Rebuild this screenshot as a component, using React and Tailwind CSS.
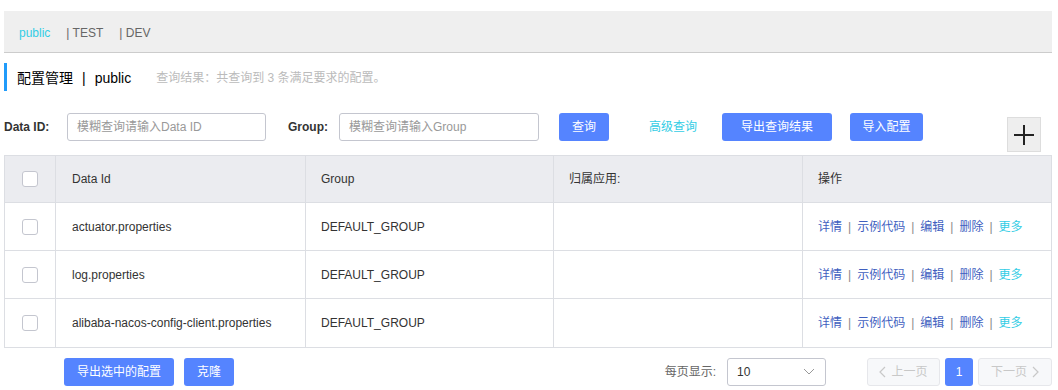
import React from 'react';

const rows = [
  { id: 'actuator.properties', group: 'DEFAULT_GROUP' },
  { id: 'log.properties', group: 'DEFAULT_GROUP' },
  { id: 'alibaba-nacos-config-client.properties', group: 'DEFAULT_GROUP' },
];

const font = { fontFamily: '"Liberation Sans", "Noto Sans CJK SC", sans-serif' };

const Checkbox = () => (
  <span className="block w-[16px] h-[16px] rounded-[3px] border border-[#c4c6cf] bg-white" />
);

const Actions = () => (
  <div className="flex items-center text-[12px] text-[#3f5fbf]">
    <span>详情</span>
    <span className="mx-[6px] text-[#888]">|</span>
    <span>示例代码</span>
    <span className="mx-[6px] text-[#888]">|</span>
    <span>编辑</span>
    <span className="mx-[6px] text-[#888]">|</span>
    <span>删除</span>
    <span className="mx-[6px] text-[#888]">|</span>
    <span className="text-[#33cde5]">更多</span>
  </div>
);

export default function App() {
  return (
    <div className="w-[1058px] h-[390px] bg-white overflow-hidden pl-[4px] text-[#333]" style={font}>
      {/* namespace tabs */}
      <div className="mt-[11px] w-[1048px] h-[42px] bg-[#efefef] border-b border-[#cccccc] flex items-center pt-[3px] pl-[15px] text-[12px]">
        <span className="text-[#33cde5]">public</span>
        <span className="ml-[16px] text-[#666]">| TEST</span>
        <span className="ml-[16px] text-[#666]">| DEV</span>
      </div>

      {/* title */}
      <div className="mt-[10px] h-[28px] border-l-[3px] border-[#209bfa] pl-[10px] pt-[2px] flex items-center">
        <span className="text-[14px] text-[#000]">配置管理</span>
        <span className="text-[14px] text-[#000] mx-[9px]">|</span>
        <span className="text-[14px] text-[#000]">public</span>
        <span className="ml-[25px] text-[12px] text-[#bbbbbb]">查询结果：共查询到 3 条满足要求的配置。</span>
      </div>

      {/* search row */}
      <div className="mt-[22px] w-[1048px] flex items-start">
        <div className="h-[28px] flex items-center text-[12px] font-bold text-[#333] w-[63px]">Data ID:</div>
        <div className="w-[199px] h-[28px] border border-[#c4c6cf] rounded-[3px] flex items-center px-[9px] text-[12px] text-[#999]">
          模糊查询请输入Data ID
        </div>
        <div className="h-[28px] ml-[22px] w-[51px] flex items-center text-[12px] font-bold text-[#333]">Group:</div>
        <div className="w-[200px] h-[28px] border border-[#c4c6cf] rounded-[3px] flex items-center px-[9px] text-[12px] text-[#999]">
          模糊查询请输入Group
        </div>
        <div className="ml-[20px] w-[50px] h-[28px] rounded-[3px] bg-[#5584ff] text-white text-[12px] flex items-center justify-center">查询</div>
        <div className="ml-[40px] h-[28px] flex items-center text-[12px] text-[#33cde5]">高级查询</div>
        <div className="ml-[25px] w-[110px] h-[28px] rounded-[3px] bg-[#5584ff] text-white text-[12px] flex items-center justify-center">导出查询结果</div>
        <div className="ml-[18px] w-[73px] h-[28px] rounded-[3px] bg-[#5584ff] text-white text-[12px] flex items-center justify-center">导入配置</div>
        <div className="ml-auto mr-[11px] mt-[4px] w-[34px] h-[35px] bg-[#eeeeee] border border-[#dddddd] flex items-center justify-center">
          <svg width="22" height="22" viewBox="0 0 22 22">
            <path d="M11 1v20M1 11h20" stroke="#222" strokeWidth="2" />
          </svg>
        </div>
      </div>

      {/* table */}
      <div className="mt-[3px] w-[1048px] border border-[#dcdee3] text-[12px] text-[#333]">
        <div className="flex h-[47px] bg-[#ebecf0] border-b border-[#dcdee3]">
          <div className="w-[51px] flex items-center justify-center border-r border-[#dcdee3]"><Checkbox /></div>
          <div className="w-[250px] flex items-center pl-[16px] border-r border-[#dcdee3]">Data Id</div>
          <div className="w-[248px] flex items-center pl-[15px] border-r border-[#dcdee3]">Group</div>
          <div className="w-[249px] flex items-center pl-[15px] border-r border-[#dcdee3]">归属应用:</div>
          <div className="flex-1 flex items-center pl-[15px]">操作</div>
        </div>
        {rows.map((r, i) => (
          <div key={r.id} className={`flex h-[48px] ${i < rows.length - 1 ? 'border-b border-[#dcdee3]' : ''}`}>
            <div className="w-[51px] flex items-center justify-center border-r border-[#dcdee3]"><Checkbox /></div>
            <div className="w-[250px] flex items-center pl-[16px] border-r border-[#dcdee3]">{r.id}</div>
            <div className="w-[248px] flex items-center pl-[15px] border-r border-[#dcdee3]">{r.group}</div>
            <div className="w-[249px] border-r border-[#dcdee3]" />
            <div className="flex-1 flex items-center pl-[15px]"><Actions /></div>
          </div>
        ))}
      </div>

      {/* footer */}
      <div className="mt-[10px] w-[1048px] flex items-center h-[28px]">
        <div className="ml-[60px] w-[110px] h-[28px] rounded-[3px] bg-[#5584ff] text-white text-[12px] flex items-center justify-center">导出选中的配置</div>
        <div className="ml-[10px] w-[50px] h-[28px] rounded-[3px] bg-[#5584ff] text-white text-[12px] flex items-center justify-center">克隆</div>
        <div className="ml-auto text-[12px] text-[#666]">每页显示:</div>
        <div className="ml-[11px] w-[99px] h-[28px] border border-[#c4c6cf] rounded-[3px] flex items-center justify-between pl-[9px] pr-[10px] text-[12px] text-[#333]">
          <span>10</span>
          <svg width="12" height="8" viewBox="0 0 12 8">
            <path d="M1 1l5 5 5-5" fill="none" stroke="#999" strokeWidth="1" />
          </svg>
        </div>
        <div className="ml-[41px] w-[73px] h-[28px] border border-[#e6e7eb] bg-[#f7f8fa] rounded-[3px] flex items-center justify-center text-[12px] text-[#c8c8c8]">
          <svg width="7" height="12" viewBox="0 0 7 12" className="mr-[5px]">
            <path d="M6 1L1 6l5 5" fill="none" stroke="#c8c8c8" strokeWidth="1.2" />
          </svg>
          上一页
        </div>
        <div className="ml-[5px] w-[28px] h-[28px] rounded-[3px] bg-[#5584ff] text-white text-[12px] flex items-center justify-center">1</div>
        <div className="ml-[5px] w-[74px] h-[28px] border border-[#e6e7eb] bg-[#f7f8fa] rounded-[3px] flex items-center justify-center text-[12px] text-[#c8c8c8]">
          下一页
          <svg width="7" height="12" viewBox="0 0 7 12" className="ml-[5px]">
            <path d="M1 1l5 5-5 5" fill="none" stroke="#c8c8c8" strokeWidth="1.2" />
          </svg>
        </div>
      </div>
    </div>
  );
}
